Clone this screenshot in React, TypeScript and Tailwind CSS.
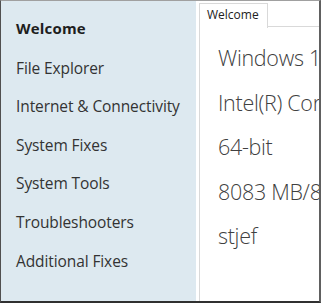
import React from "react";

const items = ["File Explorer", "Internet & Connectivity", "System Fixes", "System Tools", "Troubleshooters", "Additional Fixes"];
const info = ["Windows 10", "Intel(R) Core(TM)", "64-bit", "8083 MB/8192 MB", "stjef"];

export default function App() {
  return (
    <div
      className="w-[321px] h-[303px] flex overflow-hidden border-t border-t-[#a0a0a0] border-l border-l-[#505050] border-r-2 border-r-[#606060] border-b-2 border-b-[#303030] bg-white"
      style={{ fontFamily: '"Open Sans", "Noto Sans", sans-serif' }}
    >
      <div className="w-[195px] shrink-0 bg-[#dde9f0] flex flex-col pt-[7px] pl-[15px]">
        <div className="h-[41px] flex items-center text-[15px] font-bold text-[#1e1e1e] tracking-[0.2px]">Welcome</div>
        {items.map((t) => (
          <div key={t} className="h-[38.6px] flex items-center text-[15.5px] text-[#333] tracking-[-0.1px]">
            {t}
          </div>
        ))}
      </div>
      <div className="flex-1 flex flex-col pt-[2px] pl-[3px] min-w-0">
        <div className="flex h-[24px] border-b border-[#d9d9d9]">
          <div className="w-[69px] h-[25px] border border-b-0 border-[#d9d9d9] bg-white text-[12px] text-[#222] pl-[7px] pt-[5px] leading-none -mb-px">
            Welcome
          </div>
        </div>
        <div className="flex-1 border-l border-[#d9d9d9] pl-[18px] pt-[16px] overflow-hidden">
          {info.map((t) => (
            <div key={t} className="h-[44.6px] whitespace-nowrap text-[21.5px] text-[#404040] leading-[30px] tracking-[-0.3px]" style={{ fontWeight: 300 }}>
              {t}
            </div>
          ))}
        </div>
      </div>
    </div>
  );
}
